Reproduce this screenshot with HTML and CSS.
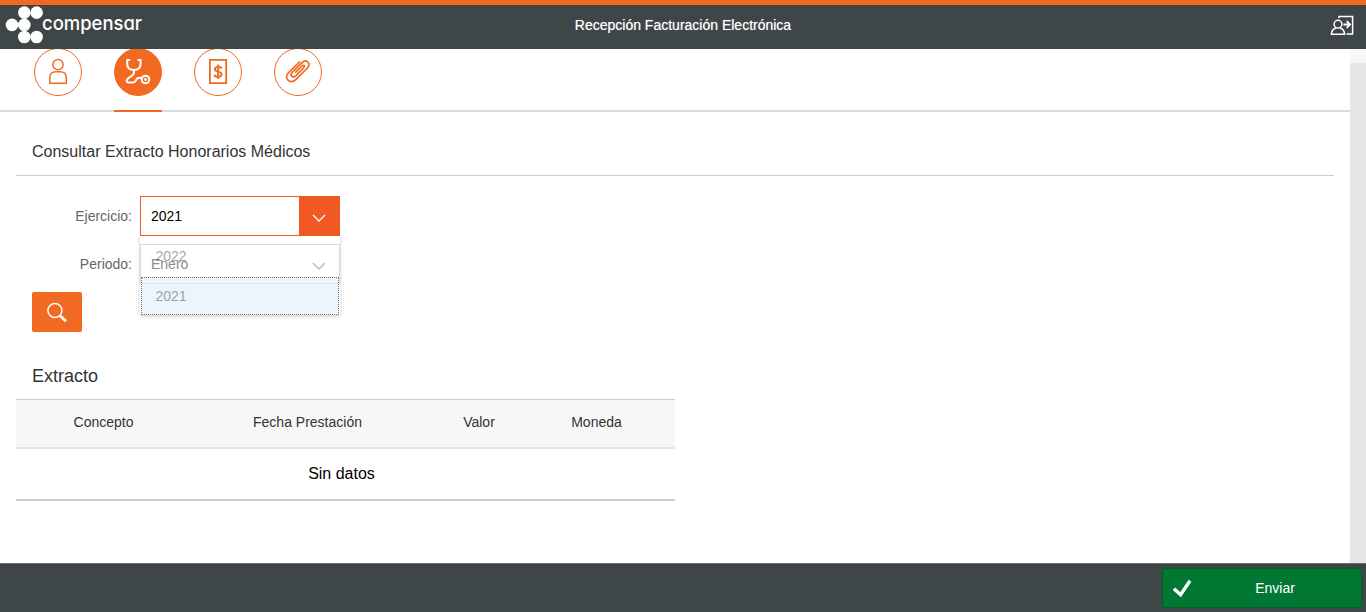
FILE: index.html
```html
<!DOCTYPE html>
<html lang="es">
<head>
<meta charset="utf-8">
<title>Recepción Facturación Electrónica</title>
<link rel="stylesheet" href="styles.css">
</head>
<body>
<div class="app">
  <header class="header">
    <svg class="logo" width="150" height="44" viewBox="0 5 150 44">
      <g fill="#fff">
        <circle cx="24.3" cy="12.6" r="6.3"/><circle cx="36.6" cy="12.6" r="6.3"/>
        <circle cx="12" cy="24.9" r="6.3"/><circle cx="24.3" cy="24.9" r="6.3"/>
        <circle cx="24.3" cy="37" r="6.3"/><circle cx="36.6" cy="37" r="6.3"/>
      </g>
      <text class="logo-text" x="42" y="30.3" textLength="100" lengthAdjust="spacingAndGlyphs">compensar</text>
    </svg>
    <h1 class="app-title">Recepción Facturación Electrónica</h1>
    <svg class="logout" width="26" height="24" viewBox="1329 14 26 24" fill="none" stroke="#fff" stroke-width="1.5">
      <circle cx="1338" cy="24.2" r="3.9"/>
      <path d="M1336 28C1333 29 1331.5 31 1331.4 34.3H1344.6C1344.5 31 1343 29 1340 28M1339 18V16.6H1352.6V33.9H1346.5"/>
      <path d="M1343.5 24.5H1349.5M1346.7 21.2L1350 24.5L1346.7 27.8" stroke-width="1.8"/>
    </svg>
  </header>
  <main class="main">
    <div class="content">
      <nav class="tabs">
        <a class="tab"><span class="tab-circle"><svg width="46" height="46" viewBox="35 49 46 46" fill="none" stroke="#f26a21" stroke-width="1.5">
          <circle cx="58" cy="64.7" r="5.1"/><path d="M49.8 83.2V78C49.8 74 52.3 71.8 56 71.8H60C63.8 71.8 66.3 74 66.3 78V83.2Z"/></svg></span></a>
        <a class="tab selected"><span class="tab-circle"><svg width="46" height="46" viewBox="115 49 46 46" fill="none" stroke="#fff" stroke-width="2">
          <path d="M130.2 60H127.2V63.5C127.2 67.7 129.8 70 133.9 70S140.600 67.700 140.600 63.500V60H137.600M133.900 70C134.500 73.500 133.800 74.900 129.500 77.400C125.800 79.500 125.800 82.500 129 82.500C133.500 82.500 135.200 82.600 136 80.200C136.800 77.800 139 77.200 142 78"/>
          <circle cx="145.5" cy="79.5" r="3.8"/><circle cx="145.5" cy="79.5" r="1.4" fill="#fff" stroke="none"/></svg></span></a>
        <a class="tab"><span class="tab-circle"><svg width="46" height="46" viewBox="195 49 46 46" fill="none" stroke="#f26a21" stroke-width="1.8">
          <path d="M209.9 59.9H226.2V83.1H209.9Z"/>
          <path d="M221.7 68.5C221 66.5 214.8 66.3 214.8 69.2C214.8 72.400 221.600 70.900 221.600 74.400C221.600 77.800 215 77.400 214.300 74.700M218.200 64.500V79" stroke-width="2"/></svg></span></a>
        <a class="tab"><span class="tab-circle"><svg width="46" height="46" viewBox="275 49 46 46" fill="none" stroke="#f26a21" stroke-width="1.7" stroke-linecap="round">
          <path d="M299.5 62L288.8 72.4C285.5 75.6 286.3 79 288.4 80.5C290.5 82 293.5 81.8 296 79.3L307 68.5C309.5 66 309.7 63.5 307.8 61.9C306 60.3 303.6 61 301.8 62.8L292.4 72.2C290.5 74.1 291 75.5 291.9 76.4C292.9 77.3 294.5 77.1 296 75.6L303.6 68C305.5 66.1 303.8 64.3 302 66L295.8 72.2"/></svg></span></a>
      </nav>
      <section class="query">
        <h2 class="section-title">Consultar Extracto Honorarios Médicos</h2>
        <div class="form">
          <div class="field">
            <label class="label">Ejercicio:</label>
            <div class="select open"><span class="value">2021</span><span class="arrow"><svg width="14" height="8" viewBox="0 0 14 8"><path d="M1 1L7 7L13 1"/></svg></span>
              <ul class="options"><li class="option">2022</li><li class="option active">2021</li></ul>
            </div>
          </div>
          <div class="field">
            <label class="label">Periodo:</label>
            <div class="select faded"><span class="value">Enero</span><span class="arrow"><svg width="14" height="8" viewBox="0 0 14 8"><path d="M1 1L7 7L13 1"/></svg></span></div>
          </div>
          <button class="search" aria-label="Buscar"><svg width="22" height="22" viewBox="46 301 22 22" fill="none" stroke="#fff"><circle cx="54.9" cy="310.5" r="7" stroke-width="1.5"/><path d="M59.8 315.4L66 321.2" stroke-width="2.8"/></svg></button>
        </div>
      </section>
      <section class="extract">
        <h2 class="extract-title">Extracto</h2>
        <table class="table">
          <colgroup><col class="c1"><col class="c2"><col class="c3"><col class="c4"></colgroup>
          <thead><tr><th>Concepto</th><th>Fecha Prestación</th><th>Valor</th><th>Moneda</th></tr></thead>
          <tbody><tr><td colspan="4">Sin datos</td></tr></tbody>
        </table>
      </section>
    </div>
    <div class="scrollbar"></div>
  </main>
  <footer class="footer">
    <button class="send"><svg class="check" width="20" height="20" viewBox="1172 578 20 20" fill="none" stroke="#fff" stroke-width="3.4"><path d="M1172.8 588.7L1179.6 594.6L1189 580.8"/></svg><span class="send-text">Enviar</span></button>
  </footer>
</div>
</body>
</html>
```
FILE: styles.css
```css
* { box-sizing: border-box; }
body { margin: 0; font-family: "Liberation Sans", Arial, sans-serif; font-size: 14px; color: #333; background: #fff; }
h1, h2, ul { margin: 0; padding: 0; font-weight: normal; list-style: none; }
button { border: 0; padding: 0; font: inherit; }
svg { display: block; }

.app { display: flex; flex-direction: column; height: 612px; overflow: hidden; }

.header { flex: none; height: 49px; border-top: 5px solid #f26a21; background: #3f4648; display: grid; grid-template-columns: 1fr auto 1fr; position: relative; z-index: 2; }
.logo-text { font-family: Inter, sans-serif; font-size: 20px; font-weight: 500; fill: #fff; font-feature-settings: "cv11" 1; }
.app-title { color: #fff; font-size: 14px; line-height: 41px; text-shadow: 0 0 1px rgba(255, 255, 255, .55); }
.logout { justify-self: end; margin: 9px 11px 0 0; }

.main { flex: 1; display: flex; min-height: 0; }
.content { flex: 1; }
.scrollbar { width: 16px; background: #e6e6e6; border-top: 14px solid #f7f7f7; }

.tabs { display: flex; gap: 32px; height: 63px; padding-left: 34px; border-bottom: 2px solid #dadada; }
.tab { width: 48px; height: 64px; margin-top: -1px; border-bottom: 2px solid transparent; }
.tab.selected { border-bottom-color: #f26a21; }
.tab-circle { display: block; width: 48px; height: 48px; border: 1px solid #f26a21; border-radius: 50%; }
.selected .tab-circle { background: #f26a21; }

.query { padding: 16px 16px 0; }
.section-title { height: 48px; padding-left: 16px; font-size: 16px; line-height: 47px; border-bottom: 1px solid #ccc; }
.form { display: flex; flex-direction: column; align-items: flex-start; gap: 8px; padding: 20px 16px 0; }
.field { display: flex; gap: 8px; }
.label { width: 100px; line-height: 40px; text-align: right; color: #666; }
.select { position: relative; display: flex; width: 200px; height: 40px; border: 1px solid #d9dadc; background: #fff; }
.value { flex: 1; padding-left: 10px; line-height: 39px; color: #000; }
.arrow { width: 40px; padding: 17px 0 0 13px; }
.arrow path { fill: none; stroke: #fff; stroke-width: 1.3; }
.open { border-color: #f25822; z-index: 1; }
.open .arrow { background: #f25822; }
.faded .value { color: #8c8c8c; }
.faded .arrow path { stroke: #b8b8b8; }
.options { position: absolute; top: 38px; left: -1px; width: 200px; height: 80px; padding: 1px; box-shadow: 0 1px 4px rgba(0, 0, 0, .22); clip-path: inset(2px -6px -6px -6px); }
.option { height: 40px; padding-left: 14.5px; line-height: 40px; color: rgba(70, 70, 70, .5); }
.option.active { height: 38px; margin-top: 1px; padding-left: 13.5px; line-height: 36px; border: 1px dotted #66747c; background: rgba(222, 236, 249, .56); }
.search { display: grid; place-items: center; width: 50px; height: 40px; border-radius: 2px; background: #f26a21; }

.extract { padding: 20px 16px 0; }
.extract-title { height: 47px; padding-left: 16px; font-size: 18px; line-height: 48px; }
.table { width: 659px; border-collapse: separate; border-spacing: 0; table-layout: fixed; border-top: 1px solid #ccc; border-bottom: 2px solid #ccc; }
.c1 { width: 175px; }
.c2 { width: 233px; }
.c3 { width: 110px; }
.c4 { width: 141px; }
th { height: 49px; padding: 0 0 3px; font-weight: normal; background: #f7f7f7; border-bottom: 2px solid #e5e5e5; }
th:nth-child(4) { padding-right: 16px; }
td { height: 50px; padding: 0 8px 1px 0; text-align: center; font-size: 16px; color: #000; }

.footer { flex: none; height: 49px; display: flex; justify-content: flex-end; padding: 4px 4px 0; background: #3f4648; border-top: 1px solid #686d70; }
.send { display: flex; align-items: center; width: 200px; height: 40px; padding: 0 10px; color: #fff; background: #007833; border: 1px solid #006128; }
.send-text { flex: 1; text-align: center; padding-left: 6px; }
```
